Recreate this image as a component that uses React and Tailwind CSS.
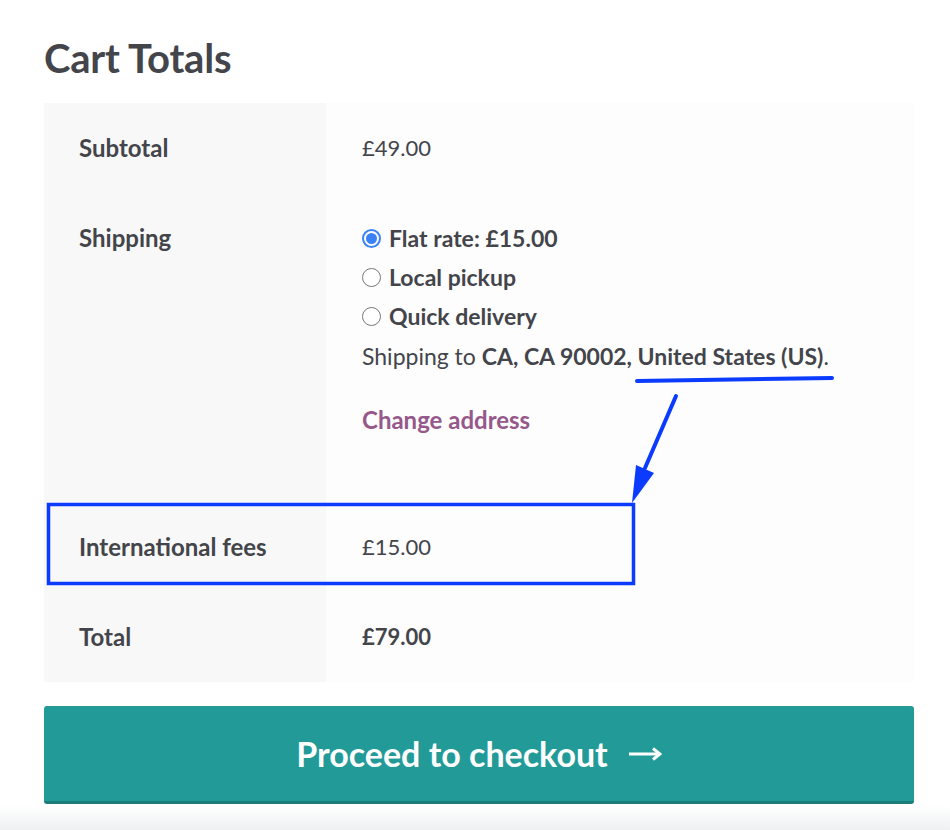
import React from "react";

function Radio({ checked }) {
  return checked ? (
    <span className="w-[19px] h-[19px] rounded-full border-[2px] border-[#3b82f6] bg-white flex items-center justify-center shrink-0">
      <span className="w-[11px] h-[11px] rounded-full bg-[#3b82f6]"></span>
    </span>
  ) : (
    <span className="w-[19px] h-[19px] rounded-full border border-[#767676] bg-white shrink-0"></span>
  );
}

function Annotations() {
  return (
    <svg className="absolute inset-0 pointer-events-none" width="950" height="830" viewBox="0 0 950 830">
      <rect x="48.5" y="504.5" width="585" height="79" fill="none" stroke="#0a3bff" strokeWidth="3.5" />
      <path d="M637 381 L832 378" stroke="#0a3bff" strokeWidth="4" strokeLinecap="round" fill="none" />
      <path d="M676 396 L645 468" stroke="#0a3bff" strokeWidth="4" strokeLinecap="round" fill="none" />
      <polygon points="632,503 636,465 654,473" fill="#0a3bff" />
    </svg>
  );
}

export default function App() {
  return (
    <div className="relative w-[950px] h-[830px] bg-white overflow-hidden font-['Lato',sans-serif] text-[#43454b]">
      {/* faint shadow at the bottom edge */}
      <div className="absolute left-0 right-0 bottom-0 h-[24px] bg-gradient-to-b from-white to-[#eef0f2]"></div>

      <div className="relative px-[44px] pr-[36px]">
        <h2 className="pt-[34px] h-[103px] text-[40px] font-bold leading-[48px] tracking-[-0.2px]">Cart Totals</h2>

        <div className="grid grid-cols-[282px_1fr] text-[23px] leading-[30px]">
          {/* Subtotal */}
          <div className="bg-[#f8f8f8] pl-[35px] py-[30px] font-bold text-[24px]">Subtotal</div>
          <div className="bg-[#fdfdfd] pl-[36px] py-[30px] text-[22px]">£49.00</div>

          {/* Shipping */}
          <div className="bg-[#f8f8f8] pl-[35px] pt-[30px] font-bold text-[24px]">Shipping</div>
          <div className="bg-[#fdfdfd] pl-[36px] pt-[30px] pb-[67px]">
            <ul className="flex flex-col gap-[9px]">
              <li className="flex items-center gap-[8px] font-bold">
                <Radio checked />
                <span>Flat rate: £15.00</span>
              </li>
              <li className="flex items-center gap-[8px] font-bold">
                <Radio />
                <span>Local pickup</span>
              </li>
              <li className="flex items-center gap-[8px] font-bold">
                <Radio />
                <span>Quick delivery</span>
              </li>
            </ul>
            <p className="mt-[10px]">
              Shipping to <strong>CA, CA 90002, United States (US)</strong>.
            </p>
            <a className="block mt-[34px] font-bold text-[24px] text-[#96588a]">Change address</a>
          </div>

          {/* International fees */}
          <div className="bg-[#f8f8f8] pl-[35px] py-[30px] font-bold text-[24px]">International fees</div>
          <div className="bg-[#fdfdfd] pl-[36px] py-[30px] text-[22px]">£15.00</div>

          {/* Total */}
          <div className="bg-[#f8f8f8] pl-[35px] py-[30px] font-bold text-[24px]">Total</div>
          <div className="bg-[#fdfdfd] pl-[36px] py-[30px] font-bold text-[22px]">£79.00</div>
        </div>

        <button className="mt-[24px] w-full h-[98px] rounded-[3px] bg-[#229a98] border-b-[3px] border-[#1d7d7c] text-white text-[34px] font-bold flex items-center justify-center gap-[20px]">
          <span>Proceed to checkout</span>
          <svg width="34" height="14" viewBox="0 0 34 14" fill="none">
            <path d="M1 7 H30" stroke="white" strokeWidth="3" />
            <path d="M25 1.5 L32 7 L25 12.5" stroke="white" strokeWidth="3" fill="none" />
          </svg>
        </button>
      </div>

      <Annotations />
    </div>
  );
}
